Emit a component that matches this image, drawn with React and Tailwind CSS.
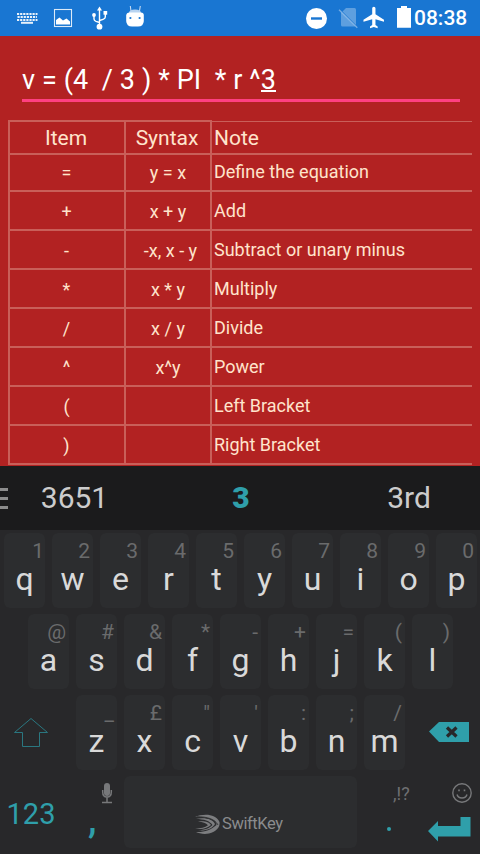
import React from "react";

const rows = [
  ["=", "y = x", "Define the equation"],
  ["+", "x + y", "Add"],
  ["-", "-x, x - y", "Subtract or unary minus"],
  ["*", "x * y", "Multiply"],
  ["/", "x / y", "Divide"],
  ["^", "x^y", "Power"],
  ["(", "", "Left Bracket"],
  [")", "", "Right Bracket"],
];

const keys1 = ["q1", "w2", "e3", "r4", "t5", "y6", "u7", "i8", "o9", "p0"];
const keys2 = ["a@", "s#", "d&", "f*", "g-", "h+", "j=", "k(", "l)"];
const keys3 = ["z_", "x£", "c\"", "v'", "b:", "n;", "m/"];

function Key({ k }) {
  return (
    <div className="h-[75px] w-[41px] shrink-0 rounded-[6px] bg-[#2c2d2f] pt-[7px]">
      <div className={`text-right text-[21px] leading-[22px] text-[#6a6b6c] ${k[1] === "1" ? "pr-px" : "pr-[3px]"}`}>{k[1]}</div>
      <div className="text-center text-[32px] leading-[34px] text-[#d9d9d9]">{k[0]}</div>
    </div>
  );
}

function StatusBar() {
  return (
    <div className="flex h-9 items-center bg-[#1976d2] text-white">
      <svg className="h-9 w-[414px] shrink-0" viewBox="0 0 414 36" fill="#fff">
        <g stroke="#fff" strokeWidth="2" fill="none" opacity=".9">
          <path d="M17 14H37.5" strokeDasharray="2.2 .9" />
          <path d="M17.5 17H37" strokeDasharray="2.2 .9" />
          <path d="M17 20H37.5" strokeDasharray="2.2 .9" />
          <path d="M21 22.8H33" />
        </g>
        <rect x="54.5" y="9.5" width="17" height="17" fill="none" stroke="#fff" strokeWidth="1.1" opacity=".85" />
        <path d="M56 24.5V20L59.5 17.5L63 20.5L66.5 18.5L70 21.5V24.5Z" />
        <path d="M99.5 9V26M94 16V19Q94 20.5 96 21.3L99.5 22.5M105.3 13V17Q105.3 18.5 103 19.3L99.5 20.5" fill="none" stroke="#fff" strokeWidth="1.4" />
        <path d="M99.5 6.5L102 10.5H97Z" />
        <circle cx="94" cy="15" r="1.9" />
        <rect x="103.5" y="11" width="3.7" height="3.7" />
        <circle cx="99.5" cy="26.7" r="2.9" />
        <path d="M130.3 6L131 11M140.3 6L139.5 11" stroke="#c7dcf3" strokeWidth="1.1" />
        <path d="M129 13Q129 9.5 135 9.5T141 13Z" fill="#b9d4f1" />
        <path d="M126.2 15Q126.5 12.5 129 12.5H141Q143.7 12.5 143.8 15V21Q143.5 26.5 138 26.5H132Q126.5 26.5 126.2 21Z" />
        <circle cx="130.4" cy="18" r="1.1" fill="#1976d2" />
        <circle cx="139.6" cy="18" r="1.1" fill="#1976d2" />
        <circle cx="316.5" cy="18.5" r="10.5" />
        <rect x="311" y="17.3" width="11" height="2.4" fill="#1976d2" />
        <path d="M346 8H354.5Q356 8 356 9.5V25Q356 26.5 354.5 26.5H342.5Q341 26.5 341 25V13Z" opacity=".3" />
        <path d="M340 10L358 28" stroke="#1976d2" strokeWidth="1.5" />
        <path d="M339 9.8L357.3 27.8" stroke="#fff" strokeWidth="1.3" opacity=".4" />
        <path transform="translate(361.3 5.3) scale(1.09)" d="M20.8 15.2V13.2L13 8.3V2.8A1.5 1.5 0 0 0 10 2.8V8.3L2 13.2V15.2L10 12.7V18L8 19.5V21L11.5 20L15 21V19.5L13 18V12.7Z" />
        <path d="M401 6H407V8H411V27.7H397V8H401Z" />
      </svg>
      <span className="pt-px text-[21px] leading-none font-medium">08:38</span>
    </div>
  );
}

export default function App() {
  return (
    <div className="h-[854px] w-[480px] overflow-hidden bg-[#b22222] font-['Roboto',sans-serif]">
      <StatusBar />
      <div className="h-[84px] pt-[27px] pl-[22px]">
        <div className="h-[36px] w-[438px] text-[27px] leading-[34px] tracking-[0.09px] whitespace-pre text-white">
          v = (4  / 3 ) * PI  * r ^<span className="inline-block h-[29px] border-b-2 border-white">3</span>
        </div>
        <div className="h-[3px] w-[438px] bg-[#ff4081]" />
      </div>

      <div className="ml-2 h-[346px] w-[464px] overflow-hidden text-[#ffe4cc]">
        <div className="grid h-[33px] grid-cols-[116px_86px_1fr] text-[21px] leading-[32px]">
          <div className="border-t-2 border-b border-l-2 border-[#c95f59] pr-[2px] text-center">Item</div>
          <div className="border-t-2 border-b border-l-2 border-[#c95f59] pr-[2px] text-center">Syntax</div>
          <div className="border-b border-l-2 border-[#c95f59] pt-px"><div className="border-t border-[#c95f59] pl-[2px] leading-[32px]">Note</div></div>
        </div>
        {rows.map(([a, b, c], i) => (
          <div
            key={a}
            className={`grid h-[39px] grid-cols-[116px_86px_1fr] border-b-2 border-[#c95f59] text-[18px] ${i === 0 ? "border-t-2 leading-[33px]" : "leading-[37px]"}`}
          >
            <div className="border-l-2 border-[#c95f59] pt-px pr-px text-center">{a}</div>
            <div className={`border-l-2 border-[#c95f59] pt-px text-center ${i === 2 ? "pl-[5px]" : ""}`}>{b}</div>
            <div className="border-l-2 border-[#c95f59] pl-[2px]">{c}</div>
          </div>
        ))}
      </div>

      <div className="flex h-16 items-center bg-[#1b1b1c] text-[30px] text-[#cccccc]">
        <div className="flex w-2 flex-col gap-[6px]">
          <div className="h-[3px] bg-[#8c8c8c]" />
          <div className="h-[3px] bg-[#8c8c8c]" />
          <div className="h-[3px] bg-[#8c8c8c]" />
        </div>
        <div className="w-[133px] pb-[2px] text-center">3651</div>
        <div className="w-[200px] pb-[2px] text-center font-black text-[#2f9faa]">3</div>
        <div className="w-[136px] pb-[2px] text-center">3rd</div>
      </div>

      <div className="h-[324px] bg-[#28282a] pt-[3px]">
        <div className="flex gap-[7px] pl-1">
          {keys1.map((k) => <Key key={k} k={k} />)}
        </div>
        <div className="mt-[6px] flex gap-[7px] pl-7">
          {keys2.map((k) => <Key key={k} k={k} />)}
        </div>
        <div className="mt-[6px] flex">
          <svg className="h-[75px] w-[76px]" viewBox="0 0 76 75" fill="none" stroke="#2a7780" strokeWidth="1">
            <path d="M31 23.5L47.5 37.5H39.5V51.5H22.5V37.5H14.5Z" />
          </svg>
          <div className="flex gap-[7px]">
            {keys3.map((k) => <Key key={k} k={k} />)}
          </div>
          <svg className="h-[75px] w-[75px]" viewBox="0 0 75 75">
            <path d="M24 36.5L34 27H64V47H34Z" fill="#2f9faa" />
            <path d="M42 32.5L51.5 41.5M51.5 32.5L42 41.5" stroke="#28282a" strokeWidth="3.2" />
          </svg>
        </div>
        <div className="mt-[6px] flex h-[72px]">
          <div className="w-[62px] pt-[21px] text-center text-[29px] leading-[34px] text-[#2f9faa]">123</div>
          <div className="w-[62px]">
            <svg className="ml-[36px] h-[29px] w-5" viewBox="0 0 20 29" fill="none" stroke="#77787a">
              <rect x="6" y="7" width="6" height="13" rx="3" fill="#77787a" stroke="none" />
              <path d="M4.7 14V16Q4.7 21 9 21T13.3 16V14M9 21V26M4 26.5H14" strokeWidth="1.5" />
            </svg>
            <div className="pl-[26px] text-[38px] leading-[29px] font-medium text-[#2f9faa]">,</div>
          </div>
          <div className="flex w-[233px] items-end rounded-[6px] bg-[#2c2d2f] pb-[13px] pl-[70px]">
            <svg className="h-[22px] w-[28px]" viewBox="0 0 28 22" fill="#7d7e80">
              <path d="M1 4C9 .5 22 .5 25.5 9C26.5 14 22 19 15 20.5C10 21.5 5 20.5 2 19C10 19.5 17 17 22.500 12C23 7 13 3 1 4Z" />
              <path d="M2 6C10 4 19 6 21 11C19 15 12 18.300 4 17.500C11 17 16 15 18.500 12C16 8 10 6 2 6Z" />
              <path d="M4 8.500C10 7.500 15.500 9 17 12C14 15 8 16.800 1 15.500C7 15.500 11 14.500 14 12.300C12 10 9 9 4 8.500Z" />
              <path d="M3 3.800C13 3.600 21 6 24 12" fill="none" stroke="#2c2d2f" strokeWidth=".8" />
            </svg>
            <span className="text-[16.5px] leading-[22px] tracking-[-0.4px] text-[#8a8b8d]">SwiftKey</span>
          </div>
          <div className="w-[64px]">
            <div className="pt-[7px] pl-[36px] text-[18px] leading-[22px] text-[#6f7072]">,!?</div>
            <div className="mt-[22px] ml-[30px] size-1 rounded-full bg-[#2f9faa]" />
          </div>
          <svg className="h-[72px] w-[59px]" viewBox="0 0 59 72">
            <g fill="none" stroke="#77787a" strokeWidth="1.4">
              <circle cx="41" cy="17" r="9.2" />
              <path d="M36 18.5Q37 22 41 22T46 18.5" />
              <path d="M38 13.5V15.3M43.5 13.5V15.3" strokeWidth="1.6" />
            </g>
            <path d="M7 55L17 45V50H39.500V41H49.500V60.500H17V65.5Z" fill="#2f9faa" />
          </svg>
        </div>
      </div>
    </div>
  );
}
